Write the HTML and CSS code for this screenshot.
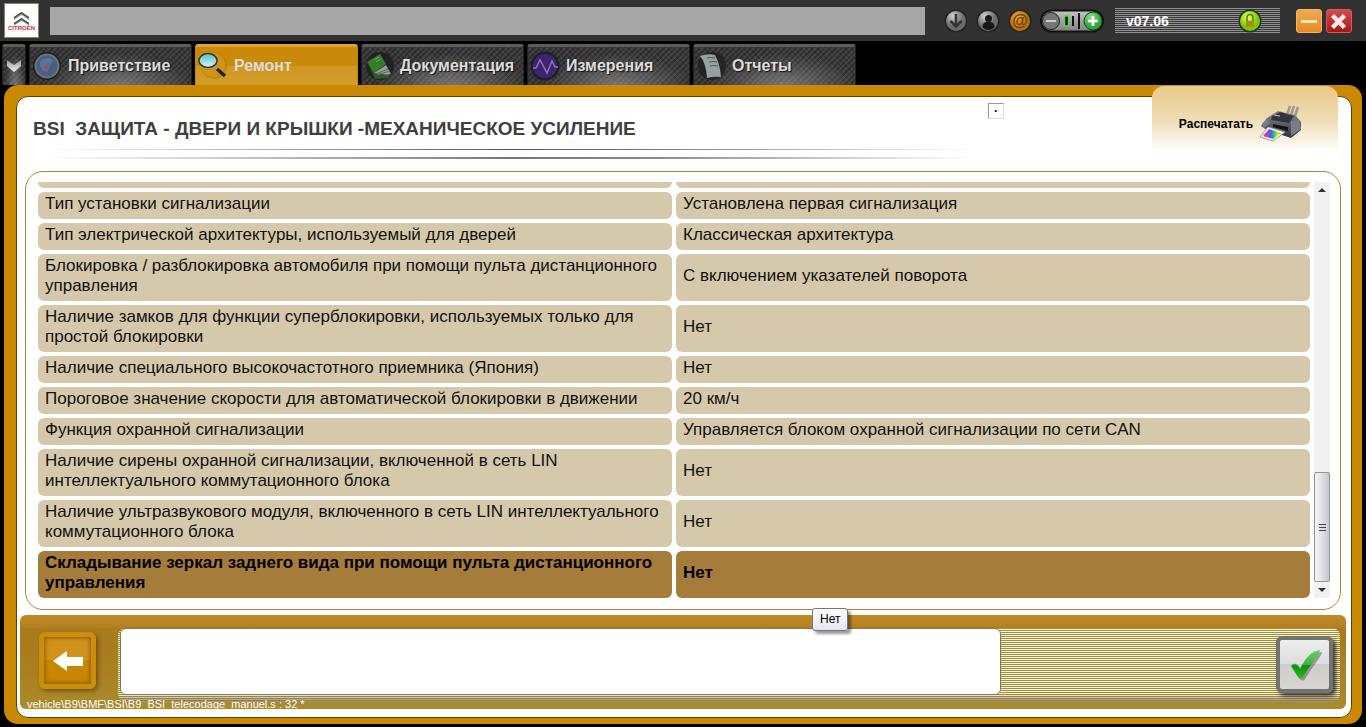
FILE: index.html
```html
<!DOCTYPE html>
<html lang="ru">
<head>
<meta charset="utf-8">
<title>BSI</title>
<link rel="stylesheet" href="styles.css">
</head>
<body>
<header class="topbar">
  <svg class="logo" viewBox="0 0 35 35" role="img" aria-label="Citroën">
    <rect x=".5" y=".5" width="34" height="34" fill="#fff" stroke="#8a8468"/>
    <path d="M10 14 17.500 9l7.500 5v3l-7.500-5-7.500 5zM10 20l7.500-5 7.500 5v2.500l-7.500-4.500-7.500 4.500z" fill="#999"/>
    <path d="m17.500 9 7.500 5v1.500l-7.500-5-7.500 5V14zM17.500 15l7.500 5v1.500l-7.500-5-7.500 5V20z" fill="#444"/>
    <text x="17.500" y="27" text-anchor="middle" class="logo-text">CITROËN</text>
  </svg>
  <div class="caption"></div>
  <div class="tools">
    <button class="round" aria-label="Загрузка"><svg viewBox="0 0 24 24"><circle cx="12" cy="12" r="11.500" fill="#242424"/><circle cx="12" cy="12" r="10" fill="url(#silver)"/><path d="M12 5v12M6.500 12l5.500 5.500 5.500-5.500" fill="none" stroke="#333" stroke-width="2.500"/></svg></button>
    <button class="round" aria-label="Пользователь"><svg viewBox="0 0 24 24"><circle cx="12" cy="12" r="11.500" fill="#242424"/><circle cx="12" cy="12" r="10" fill="url(#silver)"/><circle cx="12.500" cy="9.500" r="3.500" fill="#191919"/><path d="M6.500 18c0-4 3-5.500 6-5.500s6 1.500 6 5.500c-3 4-9 4-12 0z" fill="#191919"/></svg></button>
    <button class="round" aria-label="Почта"><svg viewBox="0 0 24 24"><circle cx="12" cy="12" r="11.500" fill="#2c2418"/><circle cx="12" cy="12" r="10" fill="url(#amber)"/><text x="12" y="16.500" text-anchor="middle" class="at">@</text></svg></button>
    <button class="volume" aria-label="Громкость"><svg viewBox="0 0 64 24"><rect x="1" y="1.500" width="62" height="21" rx="10.500" fill="url(#bar)" stroke="#111" stroke-width="2"/><circle cx="11" cy="12" r="8.500" fill="#777" stroke="#222"/><path d="M6 12h10" stroke="#ccc" stroke-width="2"/><rect x="24.500" y="7" width="4" height="10" fill="#111" stroke="#4fdc45" stroke-width="1.500"/><path d="M33 7v10M39 4v16" stroke="#111" stroke-width="2"/><circle cx="53" cy="12" r="9" fill="url(#green)" stroke="#1b3d1b"/><path d="M48 12h10M53 7v10" stroke="#fff" stroke-width="2.500"/></svg></button>
  </div>
  <div class="version"><span>v07.06</span>
    <svg class="lock" viewBox="0 0 24 24"><circle cx="12" cy="12" r="11.500" fill="#27341a"/><circle cx="12" cy="12" r="10" fill="url(#lime)"/><path d="M9 12V8.500a3 3 0 0 1 6 0V12" fill="none" stroke="#577b00" stroke-width="1.500"/><rect x="8" y="12" width="8" height="6" fill="#a58b16"/></svg>
  </div>
  <div class="window-buttons">
    <button class="min" aria-label="Свернуть"><svg viewBox="0 0 24 24"><path d="M4 11.500h16" stroke="#ffe6c0" stroke-width="3"/></svg></button>
    <button class="close" aria-label="Закрыть"><svg viewBox="0 0 24 24"><path d="m5.500 5.500 12 12M17.500 5.500l-12 12" stroke="#fbe9e9" stroke-width="4.500"/></svg></button>
  </div>
  <svg class="defs" aria-hidden="true"><defs>
    <radialGradient id="silver" cx=".35" cy=".25"><stop stop-color="#d2d2d2"/><stop offset="1" stop-color="#6c6c6c"/></radialGradient>
    <radialGradient id="amber" cx=".4" cy=".3"><stop stop-color="#eaa63c"/><stop offset="1" stop-color="#b6700a"/></radialGradient>
    <radialGradient id="green" cx=".4" cy=".3"><stop stop-color="#8dea85"/><stop offset="1" stop-color="#2fa838"/></radialGradient>
    <radialGradient id="lime" cx=".4" cy=".3"><stop stop-color="#eaff70"/><stop offset="1" stop-color="#77c800"/></radialGradient>
    <linearGradient id="bar" x2="0" y2="1"><stop stop-color="#c4c4c4"/><stop offset="1" stop-color="#808080"/></linearGradient>
    <linearGradient id="check" x2="0" y2="1"><stop stop-color="#6acb70"/><stop offset=".5" stop-color="#3db545"/><stop offset=".55" stop-color="#07930c"/><stop offset="1" stop-color="#30ba20"/></linearGradient>
    <linearGradient id="body" x2="0" y2="1"><stop stop-color="#8a8a94"/><stop offset="1" stop-color="#303038"/></linearGradient>
    <linearGradient id="rainbow"><stop stop-color="#e33"/><stop offset=".25" stop-color="#c3c"/><stop offset=".45" stop-color="#36f"/><stop offset=".65" stop-color="#3d5"/><stop offset=".85" stop-color="#fd2"/><stop offset="1" stop-color="#e43"/></linearGradient>
    <linearGradient id="glass" x2="0" y2="1"><stop stop-color="#55c2d2"/><stop offset="1" stop-color="#d6f6ee"/></linearGradient>
    <linearGradient id="chrome" x2="0" y2="1"><stop stop-color="#999"/><stop offset="1" stop-color="#f2f2f2"/></linearGradient>
  </defs></svg>
</header>
<nav class="tabs">
  <button class="tab more" aria-label="Меню"><svg viewBox="0 0 16 14"><path d="M1 1 8 6l7-5v6l-7 6-7-6z" fill="url(#chrome)"/></svg></button>
  <button class="tab"><svg viewBox="0 0 32 32"><circle cx="16" cy="16" r="14" fill="#1e1e1e"/><circle cx="16" cy="16" r="11.500" fill="#4a6080" stroke="#6c7278" stroke-width="2"/><path d="M9 12c3-5 10-5 13-1-3 3-4 8-6 11-5-1-8-5-7-10z" fill="#55779f"/><path d="m17 11 1 4-3 7-1-5z" fill="#a34d50"/></svg><span>Приветствие</span></button>
  <button class="tab active"><svg viewBox="0 0 32 32"><circle cx="17" cy="16" r="13" fill="#b97d0c" opacity=".6"/><circle cx="16" cy="15" r="12" fill="#cf9318"/><path d="m17 16 4 3" stroke="#999" stroke-width="2"/><path d="m20 19 8 7" stroke="#222" stroke-width="3.500"/><ellipse cx="11" cy="10.500" rx="9" ry="7" fill="url(#glass)" stroke="#333" stroke-width="1.500"/></svg><span>Ремонт</span></button>
  <button class="tab"><svg viewBox="0 0 32 32"><circle cx="17" cy="16" r="14" fill="#222"/><path d="M4 12 17 4l6 10-12 9z" fill="#347b2e"/><path d="m11 23 12-8 5 9-12 3z" fill="#999"/><path d="m4 12 7 11 16 2-2 3-13 1z" fill="#24601f"/><path d="m13 24 12-5M14 25l13-4" stroke="#666"/><path d="m11 10 5-3M13 12l5-3" stroke="#71a26c"/></svg><span>Документация</span></button>
  <button class="tab"><svg viewBox="0 0 32 32"><circle cx="16" cy="16" r="14.500" fill="#20202a"/><circle cx="16" cy="16" r="12" fill="#3e2470"/><path d="M4 18h3l4-8 7 13 5-12 3 6h3" fill="none" stroke="#8a78ad" stroke-width="1.500"/></svg><span>Измерения</span></button>
  <button class="tab"><svg viewBox="0 0 32 32"><circle cx="17" cy="16" r="14" fill="#242424"/><path d="M5 6q8-3 15-1 5 9 6 22-7-1-14 1Q11 13 5 6z" fill="#97a19f"/><path d="M12 8q4-1 8 0M14 12q4-1 8 0M15 16q4-1 8 0" fill="none" stroke="#525958"/></svg><span>Отчеты</span></button>
</nav>
<main class="frame">
 <div class="page">
  <section class="head">
    <div class="heading"><h1>BSI&nbsp; ЗАЩИТА - ДВЕРИ И КРЫШКИ -МЕХАНИЧЕСКОЕ УСИЛЕНИЕ</h1><div class="rule"></div></div>
    <div class="dot">·</div>
    <button class="print"><span>Распечатать</span>
      <svg viewBox="0 0 44 38"><path d="m28 10 3-9M32 10l3-9M36 11l3-9" stroke="#999" stroke-width="2.500"/><path d="M8 13 19 6l17 4 6 7v8l-10 8-24-8-6-4z" fill="url(#body)"/><path d="m13 11 8-4 14 4-5 7-18-3z" fill="#34343c"/><path d="M8 13 3 19l2 4 6-5zM32 16l8-1 2 9-10 7z" fill="#7c7c88"/><path d="m14 19 15 3v4l-15-4z" fill="#151519"/><path d="m9 22 17 5-12 9-13-4z" fill="#fff" stroke="#999"/><path d="m10 24 12 4-8 6-10-3z" fill="url(#rainbow)"/><path d="m15 10 6 1" stroke="#ccc"/></svg>
    </button>
  </section>
  <section class="panel">
    <div class="list">
    <table class="params">
      <tbody>
      <tr class="tail"><td></td><td></td></tr>
      <tr><td>Тип установки сигнализации</td><td>Установлена первая сигнализация</td></tr>
      <tr><td>Тип электрической архитектуры, используемый для дверей</td><td>Классическая архитектура</td></tr>
      <tr><td>Блокировка / разблокировка автомобиля при помощи пульта дистанционного управления</td><td>С включением указателей поворота</td></tr>
      <tr><td>Наличие замков для функции суперблокировки, используемых только для простой блокировки</td><td>Нет</td></tr>
      <tr><td>Наличие специального высокочастотного приемника (Япония)</td><td>Нет</td></tr>
      <tr><td>Пороговое значение скорости для автоматической блокировки в движении</td><td>20 км/ч</td></tr>
      <tr><td>Функция охранной сигнализации</td><td>Управляется блоком охранной сигнализации по сети CAN</td></tr>
      <tr><td>Наличие сирены охранной сигнализации, включенной в сеть LIN интеллектуального коммутационного блока</td><td>Нет</td></tr>
      <tr><td>Наличие ультразвукового модуля, включенного в сеть LIN интеллектуального коммутационного блока</td><td>Нет</td></tr>
      <tr class="selected"><td>Складывание зеркал заднего вида при помощи пульта дистанционного управления</td><td>Нет</td></tr>
      </tbody>
    </table>
    </div>
    <div class="scrollbar">
      <button aria-label="Вверх"><svg viewBox="0 0 16 16"><path d="m4 10 4-4 4 4z" fill="#333"/></svg></button>
      <div class="thumb"><i></i><i></i><i></i></div>
      <button aria-label="Вниз"><svg viewBox="0 0 16 16"><path d="m4 6 4 4 4-4z" fill="#333"/></svg></button>
    </div>
  </section>
  <footer class="footer">
    <button class="back" aria-label="Назад"><svg viewBox="0 0 32 22"><path d="M1 11 15 1v6h16v9H15v5z" fill="#fff"/></svg></button>
    <div class="strip">
      <textarea class="message" aria-label="Сообщение" readonly></textarea>
      <button class="ok" aria-label="Подтвердить"><svg viewBox="0 0 36 36"><path d="M6 21c3-4 7-2 9 3 5-10 11-18 20-19 0 4-8 12-17 27-1 2-4 2-5 0z" fill="#555" opacity=".5"/><path d="M4 19c3-4 7-2 9 3C18 12 24 4 33 3c0 4-8 12-17 27-1 2-4 2-5 0z" fill="url(#check)"/></svg></button>
    </div>
    <div class="status">vehicle\B9\BMF\BSI\B9_BSI_telecodage_manuel.s : 32 *</div>
    <div class="tooltip" role="tooltip">Нет</div>
  </footer>
 </div>
</main>
</body>
</html>
```
FILE: styles.css
```css
* { box-sizing: border-box; }
body {
  margin: 0;
  min-height: 100vh;
  display: flex;
  flex-direction: column;
  background: #000;
  font-family: "Liberation Sans", Arial, sans-serif;
}
button { padding: 0; border: 0; background: none; font: inherit; color: inherit; }
svg { display: block; }

.topbar {
  height: 41px;
  display: flex;
  align-items: center;
  padding: 0 14px 0 4px;
  background: #323232;
}
.logo { width: 35px; height: 35px; flex: none; }
.logo-text { font-size: 6px; font-weight: bold; fill: #c8323c; }
.caption { flex: 1; height: 28px; margin: 0 19px 0 11px; background: #a7a7a7; }
.tools { display: flex; align-items: center; gap: 8px; }
.round svg { width: 24px; height: 24px; }
.volume svg { width: 64px; height: 24px; }
.at { font-size: 16px; font-weight: bold; fill: #6b3e00; }
.version {
  width: 165px;
  height: 25px;
  margin: 0 16px 0 11px;
  padding: 0 18px 0 11px;
  display: flex;
  align-items: center;
  justify-content: space-between;
  color: #fff;
  font-size: 14px;
  font-weight: bold;
  background: repeating-linear-gradient(#8f8f8f 0 1px, #393939 1px 2px);
}
.lock { width: 24px; height: 24px; }
.window-buttons { display: flex; gap: 4px; }
.window-buttons button { width: 26px; height: 24px; border-radius: 3px; }
.window-buttons svg { width: 24px; height: 24px; margin: auto; }
.min { border: 1px solid #f3b467; background: linear-gradient(#efa955, #e98b21); }
.close { border: 1px solid #d45a5a; background: linear-gradient(#d34c4c, #a51717); }
.defs { width: 0; height: 0; position: absolute; }

.tabs { display: flex; gap: 3px; padding: 3px 2px 0; height: 44px; }
.tab {
  width: 163px;
  display: flex;
  align-items: center;
  gap: 5px;
  padding-left: 1px;
  border: 1px solid #222;
  border-top: 3px solid #5c5c5c;
  border-bottom: 0;
  border-radius: 3px 3px 0 0;
  color: #ddd;
  font-size: 16px;
  font-weight: bold;
  text-shadow: 1px 1px 1px #111;
  background:
    radial-gradient(ellipse at 55% 110%, rgba(180, 180, 180, .55), transparent 60%),
    repeating-linear-gradient(45deg, rgba(0, 0, 0, .15) 0 2px, transparent 2px 4px),
    repeating-linear-gradient(135deg, #333 0 2px, #444 2px 4px);
}
.tab svg { width: 32px; height: 32px; flex: none; }
.tab.more { width: 24px; padding: 0; justify-content: center; }
.tab.more svg { width: 16px; height: 14px; }
.tab.active {
  border-color: #c88800;
  border-top-color: #dda43a;
  text-shadow: none;
  background: linear-gradient(#c88a08 0 50%, #d09721 50%, #d49d2b);
}

.frame {
  flex: 1;
  display: flex;
  margin: 0 4px 3px;
  padding: 11px 10px 6px 12px;
  border-radius: 14px;
  background: #c98a02;
}
.page {
  flex: 1;
  display: flex;
  flex-direction: column;
  position: relative;
  padding: 0 5px 8px 3px;
  border: 1px solid #57400f;
  border-radius: 12px;
  background: #fff;
}
.head { display: flex; height: 74px; padding-left: 13px; }
.heading { width: 942px; }
h1 { margin: 20px 0 8px; font-size: 19px; line-height: 24px; color: #404040; white-space: nowrap; }
.rule {
  height: 10px;
  margin-left: 12px;
  background:
    linear-gradient(90deg, transparent, #555 50%, #777 65%, transparent) top / 100% 1px no-repeat,
    linear-gradient(90deg, transparent, #777 50%, #888 65%, transparent) bottom / 100% 2px no-repeat;
}
.dot {
  width: 16px;
  height: 16px;
  margin: 6px 0 0 13px;
  border: 1px solid #ddd;
  border-top-color: #999;
  border-left-color: #999;
  font-size: 12px;
  line-height: 14px;
  text-align: center;
  font-weight: bold;
}
.print {
  position: absolute;
  top: -11px;
  right: 13px;
  width: 186px;
  height: 66px;
  display: flex;
  align-items: center;
  justify-content: center;
  gap: 6px;
  padding: 10px 8px 0 0;
  border-radius: 12px 12px 0 0;
  font-size: 12px;
  font-weight: bold;
  background: linear-gradient(#e8ca8a, #f0dcb3 50%, #fff);
}
.print svg { width: 44px; height: 38px; }

.panel {
  flex: 1;
  display: flex;
  margin: 0 5px;
  padding: 6px 10px 7px 8px;
  border: 1px solid #ae8734;
  border-radius: 18px;
}
.list { flex: 1; }
.params {
  width: 100%;
  table-layout: fixed;
  border-collapse: separate;
  border-spacing: 4px;
  font-size: 17px;
  line-height: 20px;
  color: #111;
}
.params td { padding: 2px 4px 5px 7px; border-radius: 6px; background: #d6c9ab; vertical-align: middle; }
.params .tail td { height: 6px; padding: 0; border-radius: 0 0 6px 6px; }
.params .selected td { background: #a67c3b; font-weight: bold; color: #000; }

.scrollbar {
  width: 16px;
  margin: 4px 0;
  display: flex;
  flex-direction: column;
  background: #f1f1f1;
}
.scrollbar button, .scrollbar svg { width: 16px; height: 16px; }
.thumb {
  height: 110px;
  margin-top: auto;
  display: flex;
  flex-direction: column;
  align-items: center;
  justify-content: center;
  gap: 2px;
  border: 1px solid #929297;
  border-radius: 2px;
  background: linear-gradient(90deg, #f6f6f6, #e3e3e6 45%, #c6c6cc);
}
.thumb i { width: 7px; height: 1px; background: #444; }

.footer {
  position: relative;
  height: 94px;
  display: flex;
  margin-top: 5px;
  padding: 13px 6px 0 19px;
  border-radius: 6px;
  background: linear-gradient(#c08a26, #b58020 12px, #a87b1b 13px, #a97f20 55px, #a98c2d);
}
.back {
  width: 57px;
  height: 57px;
  margin: 4px 22px 0 0;
  display: flex;
  align-items: center;
  justify-content: center;
  border: 5px solid #cb8d0b;
  border-radius: 6px;
  background: linear-gradient(#cf921b 0 50%, #c88700 50%);
  box-shadow: inset 0 0 5px #704800, 2px 2px 4px rgba(80, 50, 0, .6);
}
.back svg { width: 32px; height: 22px; }
.strip {
  flex: 1;
  height: 74px;
  display: flex;
  padding: 0 7px 7px 2px;
  border-radius: 8px;
  background:
    linear-gradient(transparent 66px, rgba(135, 115, 90, .75) 73px),
    repeating-linear-gradient(#a38c3c 0 1px, #fff8dc 1px 2px);
}
.message {
  flex: 1;
  margin-right: 275px;
  height: 67px;
  border: 1px solid #857654;
  border-radius: 6px;
  background: #fff;
  resize: none;
  outline: 0;
}
.ok {
  width: 57px;
  height: 57px;
  margin-top: 8px;
  display: flex;
  align-items: center;
  justify-content: center;
  border: 4px solid #737373;
  border-radius: 6px;
  background: linear-gradient(#eee, #ddd 50%, #cfcccc 50%, #d8d5d5);
  box-shadow: 3px 3px 4px rgba(0, 0, 0, .7);
}
.ok svg { width: 36px; height: 36px; }
.status {
  position: absolute;
  left: 7px;
  bottom: -2px;
  font-size: 11px;
  line-height: 14px;
  color: #fff;
}
.tooltip {
  position: absolute;
  left: 792px;
  top: -7px;
  padding: 3px 7px;
  border: 1px solid #767676;
  border-radius: 3px;
  background: linear-gradient(#fff, #e4e5f0);
  box-shadow: 3px 3px 3px rgba(0, 0, 0, .4);
  font-size: 12px;
  line-height: 15px;
}
```
